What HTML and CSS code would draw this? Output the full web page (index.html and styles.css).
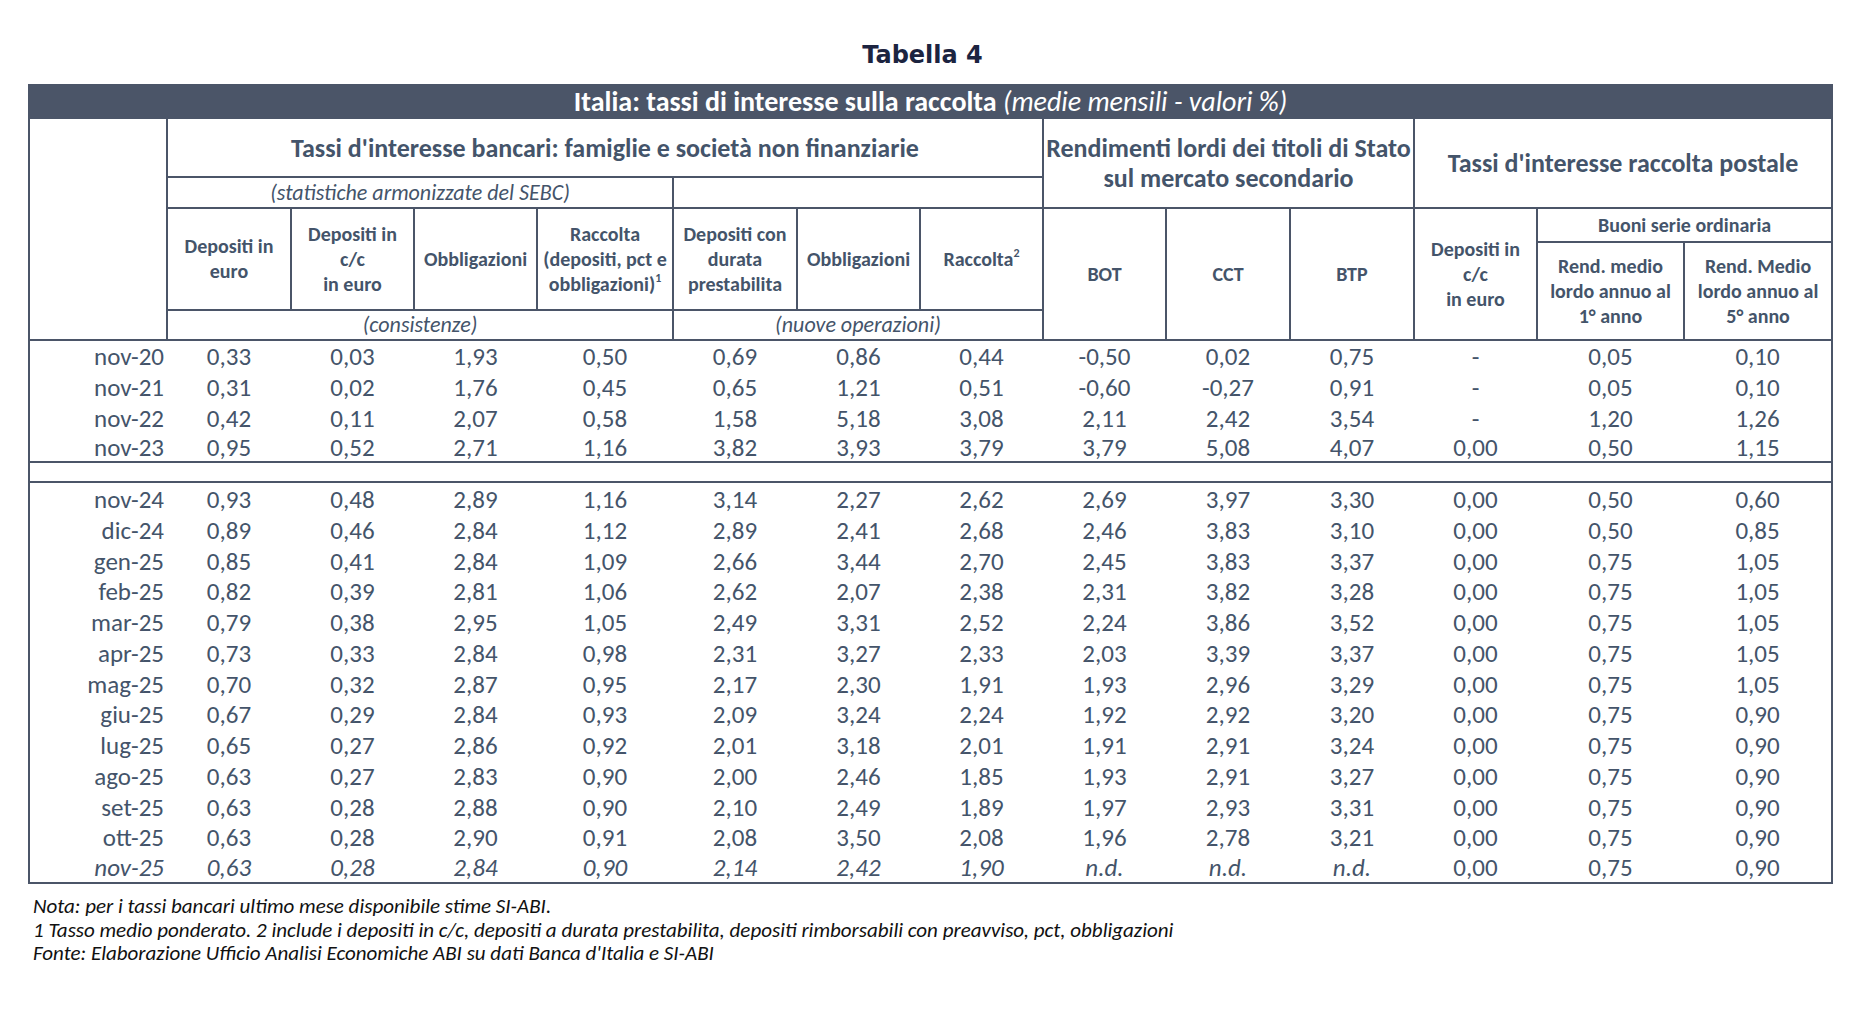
FILE: index.html
```html
<!DOCTYPE html>
<html lang="it">
<head>
<meta charset="utf-8">
<title>Tabella 4</title>
<link rel="stylesheet" href="styles.css">
</head>
<body>
<div class="page">
  <h1 class="caption">Tabella 4</h1>
  <table class="rates">
    <colgroup>
      <col class="c-label">
      <col class="c124"><col class="c123"><col class="c123"><col class="c136">
      <col class="c124"><col class="c123"><col class="c123">
      <col class="c123"><col class="c124"><col class="c124">
      <col class="c123"><col class="c147"><col class="c148">
    </colgroup>
    <thead>
      <tr class="r-title">
        <th colspan="14" class="title">Italia: tassi di interesse sulla raccolta <span class="title-note">(medie mensili - valori %)</span></th>
      </tr>
      <tr class="r-group">
        <th rowspan="5" class="blank"></th>
        <th colspan="7" class="group">Tassi d'interesse bancari: famiglie e società non finanziarie</th>
        <th colspan="3" rowspan="2" class="group">Rendimenti lordi dei titoli di Stato<br>sul mercato secondario</th>
        <th colspan="3" rowspan="2" class="group">Tassi d'interesse raccolta postale</th>
      </tr>
      <tr class="r-sub">
        <th colspan="4" class="sub">(statistiche armonizzate del SEBC)</th>
        <th colspan="3" class="sub"></th>
      </tr>
      <tr class="r-h1">
        <th rowspan="2" class="col">Depositi in<br>euro</th>
        <th rowspan="2" class="col">Depositi in<br>c/c<br>in euro</th>
        <th rowspan="2" class="col">Obbligazioni</th>
        <th rowspan="2" class="col">Raccolta<br>(depositi, pct e<br>obbligazioni)<sup>1</sup></th>
        <th rowspan="2" class="col">Depositi con<br>durata<br>prestabilita</th>
        <th rowspan="2" class="col">Obbligazioni</th>
        <th rowspan="2" class="col">Raccolta<sup>2</sup></th>
        <th rowspan="3" class="col">BOT</th>
        <th rowspan="3" class="col">CCT</th>
        <th rowspan="3" class="col">BTP</th>
        <th rowspan="3" class="col">Depositi in<br>c/c<br>in euro</th>
        <th colspan="2" class="col">Buoni serie ordinaria</th>
      </tr>
      <tr class="r-h2">
        <th rowspan="2" class="col">Rend. medio<br>lordo annuo al<br>1° anno</th>
        <th rowspan="2" class="col">Rend. Medio<br>lordo annuo al<br>5° anno</th>
      </tr>
      <tr class="r-kind">
        <th colspan="4" class="sub">(consistenze)</th>
        <th colspan="3" class="sub">(nuove operazioni)</th>
      </tr>
    </thead>
    <tbody class="first">
      <tr class="edge-top"><td class="lbl">nov-20</td><td>0,33</td><td>0,03</td><td>1,93</td><td>0,50</td><td>0,69</td><td>0,86</td><td>0,44</td><td>-0,50</td><td>0,02</td><td>0,75</td><td>-</td><td>0,05</td><td>0,10</td></tr>
      <tr><td class="lbl">nov-21</td><td>0,31</td><td>0,02</td><td>1,76</td><td>0,45</td><td>0,65</td><td>1,21</td><td>0,51</td><td>-0,60</td><td>-0,27</td><td>0,91</td><td>-</td><td>0,05</td><td>0,10</td></tr>
      <tr><td class="lbl">nov-22</td><td>0,42</td><td>0,11</td><td>2,07</td><td>0,58</td><td>1,58</td><td>5,18</td><td>3,08</td><td>2,11</td><td>2,42</td><td>3,54</td><td>-</td><td>1,20</td><td>1,26</td></tr>
      <tr class="edge-bottom"><td class="lbl">nov-23</td><td>0,95</td><td>0,52</td><td>2,71</td><td>1,16</td><td>3,82</td><td>3,93</td><td>3,79</td><td>3,79</td><td>5,08</td><td>4,07</td><td>0,00</td><td>0,50</td><td>1,15</td></tr>
    </tbody>
    <tbody class="gap">
      <tr><td colspan="14"></td></tr>
    </tbody>
    <tbody class="second">
      <tr><td class="lbl">nov-24</td><td>0,93</td><td>0,48</td><td>2,89</td><td>1,16</td><td>3,14</td><td>2,27</td><td>2,62</td><td>2,69</td><td>3,97</td><td>3,30</td><td>0,00</td><td>0,50</td><td>0,60</td></tr>
      <tr><td class="lbl">dic-24</td><td>0,89</td><td>0,46</td><td>2,84</td><td>1,12</td><td>2,89</td><td>2,41</td><td>2,68</td><td>2,46</td><td>3,83</td><td>3,10</td><td>0,00</td><td>0,50</td><td>0,85</td></tr>
      <tr><td class="lbl">gen-25</td><td>0,85</td><td>0,41</td><td>2,84</td><td>1,09</td><td>2,66</td><td>3,44</td><td>2,70</td><td>2,45</td><td>3,83</td><td>3,37</td><td>0,00</td><td>0,75</td><td>1,05</td></tr>
      <tr class="short"><td class="lbl">feb-25</td><td>0,82</td><td>0,39</td><td>2,81</td><td>1,06</td><td>2,62</td><td>2,07</td><td>2,38</td><td>2,31</td><td>3,82</td><td>3,28</td><td>0,00</td><td>0,75</td><td>1,05</td></tr>
      <tr><td class="lbl">mar-25</td><td>0,79</td><td>0,38</td><td>2,95</td><td>1,05</td><td>2,49</td><td>3,31</td><td>2,52</td><td>2,24</td><td>3,86</td><td>3,52</td><td>0,00</td><td>0,75</td><td>1,05</td></tr>
      <tr><td class="lbl">apr-25</td><td>0,73</td><td>0,33</td><td>2,84</td><td>0,98</td><td>2,31</td><td>3,27</td><td>2,33</td><td>2,03</td><td>3,39</td><td>3,37</td><td>0,00</td><td>0,75</td><td>1,05</td></tr>
      <tr><td class="lbl">mag-25</td><td>0,70</td><td>0,32</td><td>2,87</td><td>0,95</td><td>2,17</td><td>2,30</td><td>1,91</td><td>1,93</td><td>2,96</td><td>3,29</td><td>0,00</td><td>0,75</td><td>1,05</td></tr>
      <tr class="short"><td class="lbl">giu-25</td><td>0,67</td><td>0,29</td><td>2,84</td><td>0,93</td><td>2,09</td><td>3,24</td><td>2,24</td><td>1,92</td><td>2,92</td><td>3,20</td><td>0,00</td><td>0,75</td><td>0,90</td></tr>
      <tr><td class="lbl">lug-25</td><td>0,65</td><td>0,27</td><td>2,86</td><td>0,92</td><td>2,01</td><td>3,18</td><td>2,01</td><td>1,91</td><td>2,91</td><td>3,24</td><td>0,00</td><td>0,75</td><td>0,90</td></tr>
      <tr><td class="lbl">ago-25</td><td>0,63</td><td>0,27</td><td>2,83</td><td>0,90</td><td>2,00</td><td>2,46</td><td>1,85</td><td>1,93</td><td>2,91</td><td>3,27</td><td>0,00</td><td>0,75</td><td>0,90</td></tr>
      <tr><td class="lbl">set-25</td><td>0,63</td><td>0,28</td><td>2,88</td><td>0,90</td><td>2,10</td><td>2,49</td><td>1,89</td><td>1,97</td><td>2,93</td><td>3,31</td><td>0,00</td><td>0,75</td><td>0,90</td></tr>
      <tr class="short"><td class="lbl">ott-25</td><td>0,63</td><td>0,28</td><td>2,90</td><td>0,91</td><td>2,08</td><td>3,50</td><td>2,08</td><td>1,96</td><td>2,78</td><td>3,21</td><td>0,00</td><td>0,75</td><td>0,90</td></tr>
      <tr class="short"><td class="lbl est">nov-25</td><td class="est">0,63</td><td class="est">0,28</td><td class="est">2,84</td><td class="est">0,90</td><td class="est">2,14</td><td class="est">2,42</td><td class="est">1,90</td><td class="est">n.d.</td><td class="est">n.d.</td><td class="est">n.d.</td><td>0,00</td><td>0,75</td><td>0,90</td></tr>
    </tbody>
  </table>
  <div class="notes">
    <p>Nota: per i tassi bancari ultimo mese disponibile stime SI-ABI.</p>
    <p>1 Tasso medio ponderato. 2 include i depositi in c/c, depositi a durata prestabilita, depositi rimborsabili con preavviso, pct, obbligazioni</p>
    <p>Fonte: Elaborazione Ufficio Analisi Economiche ABI su dati Banca d'Italia e SI-ABI</p>
  </div>
</div>
</body>
</html>
```

FILE: styles.css
```css
html, body {
  margin: 0;
  padding: 0;
  background: #ffffff;
}

.page {
  padding: 42px 0 0 28px;
  font-family: Carlito, Lato, "Open Sans", sans-serif;
  color: #44546a;
}

.caption {
  margin: 0 0 16px 0;
  width: 1803px;
  padding-right: 14px;
  box-sizing: border-box;
  text-align: center;
  font-family: "DejaVu Sans", Verdana, sans-serif;
  font-weight: bold;
  font-size: 24px;
  line-height: 26px;
  color: #1c2440;
}

.rates {
  border-collapse: collapse;
  table-layout: fixed;
  width: 1804px;
  border: 2px solid #4b5568;
}

.c-label { width: 138px; }
.c123 { width: 123px; }
.c124 { width: 124px; }
.c136 { width: 136px; }
.c147 { width: 147px; }
.c148 { width: 148px; }

.rates th,
.rates td {
  padding: 0;
  text-align: center;
  vertical-align: middle;
  white-space: nowrap;
}

.rates thead th {
  border: 2px solid #4b5568;
  font-weight: bold;
}

.r-title { height: 33px; }
.r-group { height: 59px; }
.r-sub { height: 31px; }
.r-h1 { height: 34px; }
.r-h2 { height: 68px; }
.r-kind { height: 30px; }

.rates th.title {
  background: #4b5568;
  color: #ffffff;
  font-size: 28px;
  line-height: 29px;
}

.title-note {
  font-style: italic;
  font-weight: normal;
}

.rates th.group {
  font-size: 26px;
  line-height: 30px;
}

.rates th.sub {
  font-style: italic;
  font-weight: normal;
  font-size: 22px;
  line-height: 26px;
}

.rates th.col {
  font-size: 20px;
  line-height: 25px;
}

.rates sup {
  font-size: 12px;
  line-height: 0;
  vertical-align: 9px;
}

.rates tbody td {
  font-size: 25px;
  height: 29px;
  padding-top: 2px;
  line-height: 26px;
}

.rates tbody tr.short td {
  height: 28px;
}

.rates tbody tr.edge-top td {
  height: 28px;
}

.rates tbody tr.edge-bottom td {
  height: 26px;
}

.rates td.lbl {
  text-align: right;
  padding-right: 3px;
}

.rates td.est {
  font-style: italic;
}

.rates tbody.gap td {
  height: 18px;
  padding-top: 0;
  border-top: 2px solid #4b5568;
  border-bottom: 2px solid #4b5568;
}

.notes {
  margin-top: 11px;
  padding-left: 5px;
  font-style: italic;
  font-size: 21px;
  line-height: 23.5px;
  color: #111111;
}

.notes p {
  margin: 0;
}
```
